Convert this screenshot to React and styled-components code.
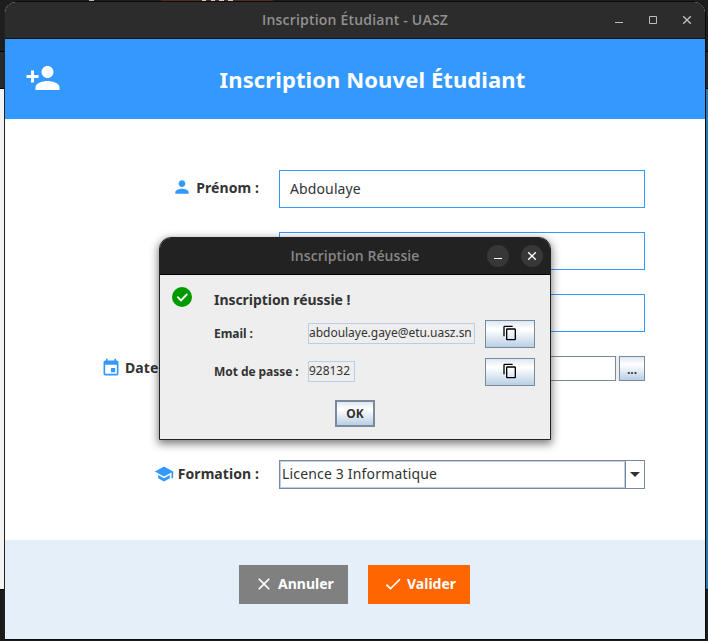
import React from 'react';
import styled, { createGlobalStyle, css } from 'styled-components';
import {
  MdCheck, MdClose, MdContentCopy, MdEvent, MdPerson, MdPersonAdd, MdSchool,
} from 'react-icons/md';

const GlobalStyle = createGlobalStyle`
  *, *::before, *::after { box-sizing: border-box; }
  body { margin: 0; overflow: hidden; }
  button, input { font-family: inherit; margin: 0; }
  svg { display: block; flex: none; }
`;

const metal = 'linear-gradient(#dde8f3 0%, #ffffff 30%, #ffffff 34%, #b8cfe5 100%)';

const Desktop = styled.div`
  position: relative;
  width: 708px;
  height: 641px;
  padding: 1px 2px 1px 4px;
  overflow: hidden;
  font-family: 'Noto Sans', 'Open Sans', sans-serif;
  color: #333;
  background:
    linear-gradient(90deg, transparent 89px, #bbb 89px, #bbb 94px, transparent 94px, transparent 202px,
      #ccc 202px, #ccc 206px, #552b1e 206px, #552b1e 211px, #ccc 211px, #ccc 215px, #552b1e 215px,
      #552b1e 219px, #ccc 219px, #ccc 224px, #552b1e 224px, #552b1e 228px, #ccc 228px, #ccc 233px,
      transparent 233px) 0 0 / 708px 1px no-repeat,
    linear-gradient(#552b1e, #552b1e) 161px 0 / 112px 1px no-repeat,
    linear-gradient(#1e1e1e 51px, #000 51px, #000 52px, #2a2a2a 52px, #2a2a2a 88px, #000 88px, #000 89px,
      transparent 89px, transparent 589px, #000 589px, #000 590px, #1b1b1b 590px),
    linear-gradient(90deg, #f3f3f3 354px, #2a78ad 354px);
`;

const Window = styled.main`
  display: flex;
  flex-direction: column;
  width: 702px;
  height: 639px;
  border: 1px solid #0b0b0b;
  border-left-color: #222;
  border-radius: 12px 12px 0 0;
  background: #fff;
  overflow: hidden;
`;

const TitleBar = styled.header`
  display: grid;
  grid-template-columns: 1fr auto;
  align-items: center;
  height: 37px;
  background: #2c2c2c;
  border-bottom: 1px solid #111;
`;

const TitleText = styled.span`
  grid-area: 1 / 1 / 2 / 3;
  text-align: center;
  font: 600 14px/20px 'Open Sans', 'Noto Sans', sans-serif;
  letter-spacing: ${(p) => p.$tracking || '0'};
  color: ${(p) => p.$color || '#919191'};
`;

const WindowControls = styled.div`
  grid-area: 1 / 2;
  display: flex;
  gap: 22px;
  padding-right: 12px;
`;

const Banner = styled.div`
  display: grid;
  grid-template-columns: 56px 1fr 41px;
  align-items: center;
  height: 80px;
  flex: none;
  padding-left: 20px;
  background: #3399ff;
  color: #fff;
  svg { margin-top: -3px; }
`;

const BannerTitle = styled.h1`
  margin: 0;
  text-align: center;
  font-size: 22px;
  line-height: 30px;
  font-weight: 700;
  letter-spacing: 0.1px;
`;

const Form = styled.form`
  display: flex;
  flex-direction: column;
  gap: 24px;
  flex: none;
  height: 421px;
  padding: 51px 60px 0 96px;
`;

const FormRow = styled.div`
  display: grid;
  grid-template-columns: 158px 366px;
  column-gap: 20px;
  height: ${(p) => p.$height}px;
  margin-top: ${(p) => p.$offset || 0}px;
`;

const FieldLabel = styled.label`
  display: flex;
  align-items: center;
  justify-content: ${(p) => (p.$start ? 'flex-start' : 'flex-end')};
  gap: 4px;
  height: 100%;
  padding-bottom: ${(p) => p.$lift || 2}px;
  font-size: 14px;
  font-weight: 700;
  letter-spacing: 0.08px;
  white-space: nowrap;
  svg { color: #3399ff; }
`;

const TextInput = styled.input`
  width: 100%;
  height: 100%;
  padding: 0 10px 2px;
  border: 1px solid #3399ff;
  border-radius: 0;
  background: #fff;
  font-size: 14px;
  letter-spacing: 0.12px;
  color: #333;
`;

const DatePicker = styled.div`
  display: grid;
  grid-template-columns: 1fr 26px;
  column-gap: 3px;
  background: #eee;
`;

const DateInput = styled(TextInput)`
  border-color: #7a8a99;
`;

const MetalButton = styled.button`
  display: flex;
  align-items: center;
  justify-content: center;
  width: ${(p) => p.$width}px;
  height: ${(p) => p.$height}px;
  padding: 0;
  border: ${(p) => (p.$default ? 2 : 1)}px solid #7a8a99;
  background: ${metal};
  font-size: 12px;
  font-weight: 700;
  color: #333;
  ${(p) => p.$icon && css`padding-bottom: 2px; color: #000;`}
`;

const BrowseButton = styled(MetalButton)`
  padding-top: 2px;
`;

const Combo = styled.div`
  display: grid;
  grid-template-columns: 1fr 19px;
  border: 1px solid #7a8a99;
`;

const ComboValue = styled.span`
  display: flex;
  align-items: center;
  padding: 0 1px 2px;
  border: 1px solid #b8cfe5;
  font-size: 14px;
  letter-spacing: 0.17px;
`;

const ComboArrow = styled.span`
  display: flex;
  align-items: center;
  justify-content: center;
  border-left: 1px solid #7a8a99;
`;

const Footer = styled.footer`
  display: flex;
  justify-content: center;
  gap: 20px;
  flex: 1;
  padding: 25px 1px 0 0;
  background: #e4effa;
`;

const ActionButton = styled.button`
  display: flex;
  align-items: center;
  gap: 4px;
  width: ${(p) => p.$width}px;
  height: 39px;
  padding: 0 0 2px 15px;
  border: 0;
  background: ${(p) => p.$color};
  font-size: 14px;
  font-weight: 700;
  color: #fff;
`;

const Dialog = styled.section`
  position: absolute;
  left: 159px;
  top: 237px;
  width: 392px;
  height: 203px;
  border: 1px solid #222;
  border-radius: 12px 12px 0 0;
  background: #eee;
  box-shadow: 0 3px 8px 1px rgba(0, 0, 0, 0.5);
  overflow: hidden;
`;

const DialogTitleBar = styled(TitleBar)`
  background: #222;
  border-bottom-color: #000;
`;

const DialogControls = styled(WindowControls)`
  gap: 12px;
  padding-right: 7px;
`;

const RoundControl = styled.span`
  display: grid;
  place-items: center;
  width: 22px;
  height: 22px;
  border-radius: 50%;
  background: #373737;
`;

const DialogBody = styled.div`
  display: grid;
  grid-template-columns: 24px 1fr;
  column-gap: 20px;
  padding: 10px 15px 0 10px;
`;

const DialogHeading = styled.h2`
  margin: 5px 0 10px;
  font-size: 14px;
  line-height: 20px;
  font-weight: 700;
  letter-spacing: -0.05px;
`;

const Credential = styled.div`
  display: grid;
  grid-template-columns: 94px 1fr 50px;
  align-items: center;
  height: 28px;
  margin-bottom: 10px;
`;

const CredentialLabel = styled.span`
  font-size: 12px;
  line-height: 16px;
  font-weight: 700;
  letter-spacing: -0.06px;
`;

const CredentialValue = styled.span`
  justify-self: start;
  width: ${(p) => p.$width}px;
  height: 21px;
  margin-top: -1px;
  border: 1px solid #b8cfe5;
  font-size: 12px;
  line-height: 18px;
  letter-spacing: -0.03px;
  white-space: nowrap;
`;

const DialogActions = styled.div`
  display: flex;
  justify-content: center;
  padding-top: 4px;
`;

const Minimize = ({ color }) => (
  <svg width="12" height="12" viewBox="0 0 12 12"><path d="M2 8.5h8" stroke={color} /></svg>
);

const CloseMark = ({ color }) => (
  <svg width="12" height="12" viewBox="0 0 12 12">
    <path d="M2.2 2.2l7.6 7.6M9.8 2.2L2.2 9.8" stroke={color} strokeWidth="1.4" />
  </svg>
);

const SuccessBadge = () => (
  <svg width="24" height="24" viewBox="0 0 24 24">
    <circle cx="12" cy="12" r="10" fill="#009900" />
    <path d="M7.8 12.2l3.2 3.2 5.7-5.9" fill="none" stroke="#fff" strokeWidth="1.8" strokeLinecap="round" />
  </svg>
);

const credentials = [
  { label: 'Email :', value: 'abdoulaye.gaye@etu.uasz.sn', width: 167 },
  { label: 'Mot de passe :', value: '928132', width: 47 },
];

export default function App() {
  return (
    <Desktop>
      <GlobalStyle />
      <Window>
        <TitleBar>
          <TitleText $tracking="0.2px">Inscription Étudiant - UASZ</TitleText>
          <WindowControls>
            <Minimize color="#bdbdbd" />
            <svg width="12" height="12" viewBox="0 0 12 12">
              <path d="M2.5 2.5h7v7h-7z" fill="none" stroke="#bdbdbd" />
            </svg>
            <CloseMark color="#bdbdbd" />
          </WindowControls>
        </TitleBar>
        <Banner>
          <MdPersonAdd size={36} />
          <BannerTitle>Inscription Nouvel Étudiant</BannerTitle>
        </Banner>
        <Form>
          <FormRow $height={38}>
            <FieldLabel $lift={4}><MdPerson size={20} />Prénom :</FieldLabel>
            <TextInput defaultValue="Abdoulaye" />
          </FormRow>
          <FormRow $height={38}>
            <FieldLabel />
            <TextInput />
          </FormRow>
          <FormRow $height={38}>
            <FieldLabel />
            <TextInput />
          </FormRow>
          <FormRow $height={25}>
            <FieldLabel $start><MdEvent size={20} />Date</FieldLabel>
            <DatePicker>
              <DateInput />
              <BrowseButton type="button" $width={26} $height={25}>...</BrowseButton>
            </DatePicker>
          </FormRow>
          <FormRow $height={29} $offset={55}>
            <FieldLabel><MdSchool size={20} />Formation :</FieldLabel>
            <Combo>
              <ComboValue>Licence 3 Informatique</ComboValue>
              <ComboArrow>
                <svg width="10" height="5" viewBox="0 0 10 5"><path d="M0 0h10L5 5z" fill="#333" /></svg>
              </ComboArrow>
            </Combo>
          </FormRow>
        </Form>
        <Footer>
          <ActionButton $width={109} $color="#808080"><MdClose size={20} />Annuler</ActionButton>
          <ActionButton $width={102} $color="#ff6600"><MdCheck size={20} />Valider</ActionButton>
        </Footer>
      </Window>

      <Dialog role="dialog">
        <DialogTitleBar>
          <TitleText $color="#878787" $tracking="0.07px">Inscription Réussie</TitleText>
          <DialogControls>
            <RoundControl><Minimize color="#fff" /></RoundControl>
            <RoundControl><CloseMark color="#fff" /></RoundControl>
          </DialogControls>
        </DialogTitleBar>
        <DialogBody>
          <SuccessBadge />
          <div>
            <DialogHeading>Inscription réussie !</DialogHeading>
            {credentials.map((c) => (
              <Credential key={c.label}>
                <CredentialLabel>{c.label}</CredentialLabel>
                <CredentialValue $width={c.width}>{c.value}</CredentialValue>
                <MetalButton $icon $width={50} $height={28}><MdContentCopy size={16} /></MetalButton>
              </Credential>
            ))}
          </div>
        </DialogBody>
        <DialogActions>
          <MetalButton $default $width={40} $height={27}>OK</MetalButton>
        </DialogActions>
      </Dialog>
    </Desktop>
  );
}
